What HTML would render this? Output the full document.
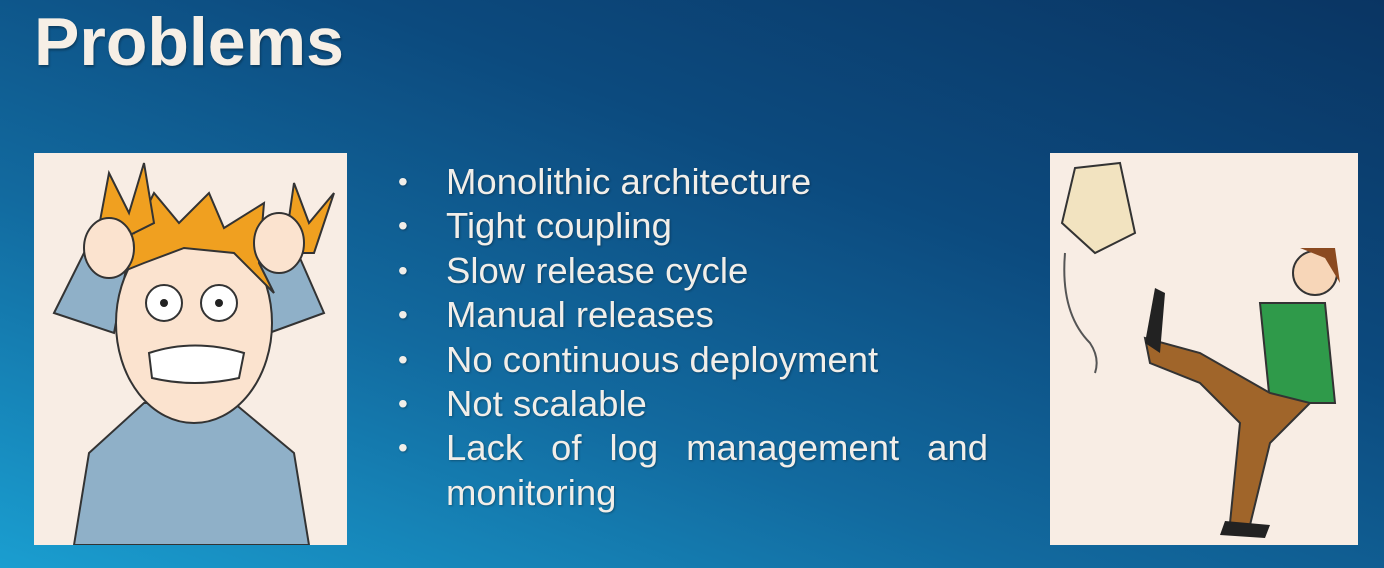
<!DOCTYPE html>
<html><head><style>
html,body{margin:0;padding:0}
body{width:1384px;height:568px;overflow:hidden;position:relative;font-family:"Liberation Sans",Arial,sans-serif;
background:linear-gradient(200deg,#0a3563 0%,#0c4a7e 35%,#126a9f 65%,#1a9ed0 100%);}
h1{position:absolute;left:34px;top:8px;margin:0;font-size:68px;line-height:1;font-weight:bold;color:#f6efe6;text-shadow:1px 2px 2px rgba(0,0,0,.3)}
.panel{position:absolute;background:#f8ede4;}
ul{position:absolute;left:404px;top:160px;margin:0;padding:0;list-style:none;color:#f1eee9;font-size:36.5px;line-height:44.4px;width:584px;text-shadow:1px 1px 2px rgba(0,0,0,.3)}
li{position:relative;padding-left:42px;text-align:justify}
li:before{content:"•";position:absolute;left:-6px;font-size:28px}
</style></head><body>
<h1>Problems</h1>
<div class="panel" style="left:34px;top:153px;width:313px;height:392px">
<svg width="313" height="392" viewBox="0 0 313 392">
<path d="M20 160 L60 80 L95 100 L80 180 Z M290 160 L255 80 L220 100 L235 180Z" fill="#8fb0c8" stroke="#333" stroke-width="2"/>
<path d="M40 392 L55 300 L110 250 L200 250 L260 300 L275 392Z" fill="#8fb0c8" stroke="#333" stroke-width="2"/>
<ellipse cx="160" cy="170" rx="78" ry="100" fill="#fbe3cf" stroke="#333" stroke-width="2"/>
<path d="M85 120 L70 60 L100 80 L120 40 L145 70 L175 40 L190 75 L230 50 L225 110 L240 140 L200 100 L150 95 L110 110Z" fill="#f0a020" stroke="#333" stroke-width="2"/>
<path d="M60 100 L75 20 L95 60 L110 10 L120 70Z M250 100 L260 30 L275 70 L300 40 L280 100Z" fill="#f0a020" stroke="#333" stroke-width="2"/>
<ellipse cx="75" cy="95" rx="25" ry="30" fill="#fbe3cf" stroke="#333" stroke-width="2"/>
<ellipse cx="245" cy="90" rx="25" ry="30" fill="#fbe3cf" stroke="#333" stroke-width="2"/>
<circle cx="130" cy="150" r="18" fill="#fff" stroke="#333" stroke-width="2"/><circle cx="185" cy="150" r="18" fill="#fff" stroke="#333" stroke-width="2"/>
<circle cx="130" cy="150" r="4" fill="#222"/><circle cx="185" cy="150" r="4" fill="#222"/>
<path d="M115 200 Q160 185 210 200 L205 225 Q160 235 118 225Z" fill="#fff" stroke="#333" stroke-width="2"/>
</svg></div>
<div class="panel" style="left:1050px;top:153px;width:308px;height:392px">
<svg width="308" height="392" viewBox="0 0 308 392">
<path d="M25 15 L70 10 L85 80 L45 100 L12 70Z" fill="#f2e3c0" stroke="#333" stroke-width="2"/>
<path d="M15 100 Q10 160 40 190 Q50 205 45 220" fill="none" stroke="#555" stroke-width="2"/>
<circle cx="265" cy="120" r="22" fill="#f7d6b8" stroke="#333" stroke-width="2"/>
<path d="M250 95 L285 95 L290 130 L275 105Z" fill="#8b4a20"/>
<path d="M210 150 L275 150 L285 250 L220 250Z" fill="#2f9a4a" stroke="#333" stroke-width="2"/>
<path d="M220 240 L150 200 L95 185 L100 210 L150 230 L190 270 L180 370 L200 372 L220 290 L260 250Z" fill="#a0652a" stroke="#333" stroke-width="2"/>
<path d="M95 190 L105 135 L115 140 L110 200Z" fill="#222"/>
<path d="M175 368 L220 372 L215 385 L170 382Z" fill="#222"/>
</svg></div>
<ul>
<li>Monolithic architecture</li>
<li>Tight coupling</li>
<li>Slow release cycle</li>
<li>Manual releases</li>
<li>No continuous deployment</li>
<li>Not scalable</li>
<li>Lack of log management and monitoring</li>
</ul>
</body></html>
